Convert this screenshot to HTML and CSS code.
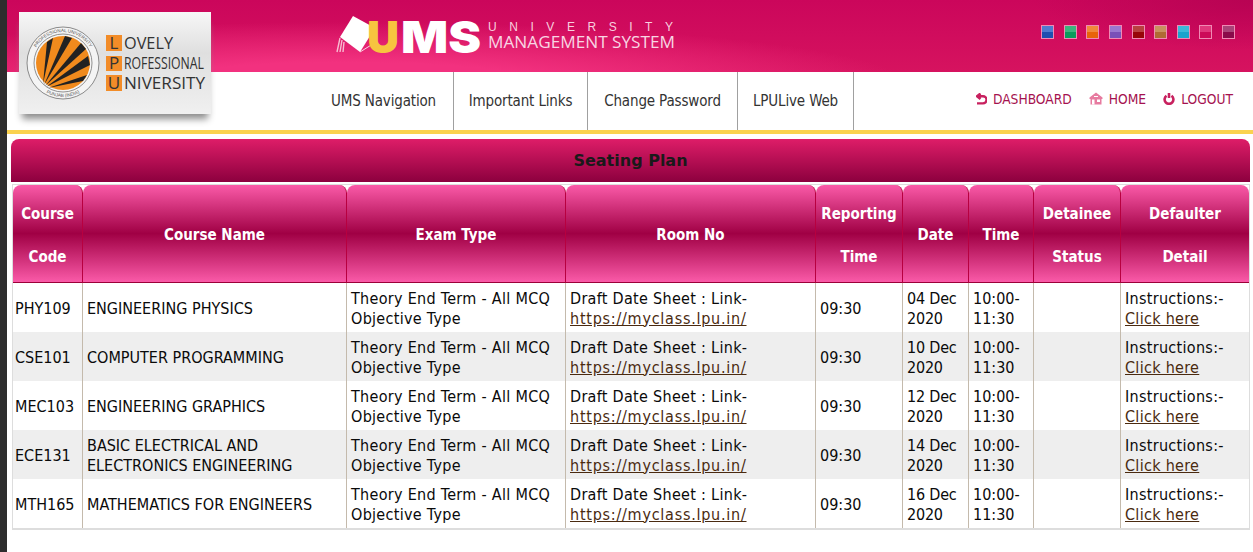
FILE: index.html
```html
<!DOCTYPE html>
<html>

<head>
    <meta content="text/html; charset=utf-8" http-equiv="Content-Type">
    <title>Seating Plan</title>
    <link rel="stylesheet" href="styles.css">
</head>

<body>
    <div class="pageWrap">
        <div class="sideStrip"></div>
        <div class="mainContainer">
            <div class="logoBox">
                <svg class="logoSeal" width="76" height="76" viewBox="0 0 76 76">
                    <defs>
                        <path id="sealTop" d="M7 38 A31 31 0 0 1 69 38"></path>
                        <path id="sealBottom" d="M4 38 A34 34 0 0 0 72 38"></path>
                    </defs>
                    <circle cx="38" cy="38" r="36" fill="#f4f4f4" stroke="#8a8a8a" stroke-width="1"></circle>
                    <circle cx="38" cy="38" r="29" fill="#f4f4f4" stroke="#777" stroke-width="0.8"></circle>
                    <circle cx="38" cy="38" r="27" fill="#f08a1d"></circle>
                    <path d="M18 59 L22 17 L28 13 Z" fill="#222"></path>
                    <path d="M19 60 L40 11 L47 13 Z" fill="#222"></path>
                    <path d="M20 61 L56 18 L61 24 Z" fill="#222"></path>
                    <path d="M21 62 L63 31 L65 40 Z" fill="#222"></path>
                    <path d="M23 63 L62 50 L58 56 Z" fill="#222"></path>
                    <text class="sealText"><textPath href="#sealTop" startOffset="50%" text-anchor="middle">PROFESSIONAL UNIVERSITY</textPath></text>
                    <text class="sealText"><textPath href="#sealBottom" startOffset="50%" text-anchor="middle">PUNJAB (INDIA)</textPath></text>
                </svg>
                <svg class="logoWords" width="104" height="72" viewBox="0 0 104 72">
                    <rect x="0" y="8" width="16" height="16" fill="#f28c28"></rect>
                    <rect x="0" y="29" width="16" height="15" fill="#f28c28"></rect>
                    <rect x="0" y="48" width="16" height="16" fill="#f28c28"></rect>
                    <text class="logoLetter" x="8" y="22" text-anchor="middle">L</text>
                    <text class="logoLetter" x="8" y="42" text-anchor="middle">P</text>
                    <text class="logoLetter" x="8" y="62" text-anchor="middle">U</text>
                    <text class="logoLetter" x="18" y="22" textLength="49" lengthAdjust="spacingAndGlyphs">OVELY</text>
                    <text class="logoLetter" x="18" y="42" textLength="80" lengthAdjust="spacingAndGlyphs">ROFESSIONAL</text>
                    <text class="logoLetter" x="18" y="62" textLength="81" lengthAdjust="spacingAndGlyphs">NIVERSITY</text>
                </svg>
            </div>

            <div class="topBar">
                <div class="umsBrand">
                    <svg class="umsMark" width="345" height="57" viewBox="0 0 345 57">
                        <path d="M6 22 L19 1 L41 13 L26 37 Z" fill="#fff"></path>
                        <path d="M41 13 L42 27 L26 37" fill="none" stroke="#f9d7e3" stroke-width="1"></path>
                        <path d="M6 23 L3 37 M8 25 L6 37 M10 27 L9 37" stroke="#f7bdd2" stroke-width="1.4"></path>
                        <text class="umsU" x="33" y="38" textLength="32" lengthAdjust="spacingAndGlyphs">U</text>
                        <text class="umsRest" x="67" y="38" textLength="80" lengthAdjust="spacingAndGlyphs">MS</text>
                        <text class="umsTop" x="154" y="16" textLength="185" lengthAdjust="spacing">UNIVERSITY</text>
                        <text class="umsBottom" x="154" y="33" textLength="187" lengthAdjust="spacingAndGlyphs">MANAGEMENT SYSTEM</text>
                    </svg>
                </div>
                <div class="themeSwatches">
                    <span class="swatch swBlue"></span>
                    <span class="swatch swGreen"></span>
                    <span class="swatch swOrange"></span>
                    <span class="swatch swPurple"></span>
                    <span class="swatch swRed"></span>
                    <span class="swatch swTan"></span>
                    <span class="swatch swCyan"></span>
                    <span class="swatch swPink"></span>
                    <span class="swatch swMaroon"></span>
                </div>
            </div>

            <div class="navBar">
                <div class="navItems">
                    <a class="navItem">UMS Navigation</a>
                    <a class="navItem">Important Links</a>
                    <a class="navItem">Change Password</a>
                    <a class="navItem">LPULive Web</a>
                </div>
                <div class="quickLinks">
                    <a class="quickLink">
                        <svg width="11" height="12" viewBox="0 0 11 12"><path d="M4.5 0.5 L1 3.2 L4.5 6 M1.5 3.2 H7 A3.6 3.6 0 0 1 7 10.4 H1" fill="none" stroke="#c8215f" stroke-width="2.4"></path></svg>
                        DASHBOARD
                    </a>
                    <a class="quickLink">
                        <svg width="14" height="13" viewBox="0 0 14 13"><path d="M7 0.5 L13.5 5.5 V7 H12.5 V12.5 H1.5 V7 H0.5 V5.5 Z" fill="#e77ba0"></path><path d="M3 7.5 H5.5 V12.5 H3 Z M8 7.5 H11 V10 H8 Z" fill="#fff"></path><path d="M5 4.5 H9" stroke="#fff"></path></svg>
                        HOME
                    </a>
                    <a class="quickLink">
                        <svg width="12" height="13" viewBox="0 0 12 13"><path d="M3.5 3.8 A4.4 4.4 0 1 0 8.5 3.8" fill="none" stroke="#c8215f" stroke-width="2.6"></path><path d="M6 1 V6" stroke="#c8215f" stroke-width="2.6"></path></svg>
                        LOGOUT
                    </a>
                </div>
            </div>
            <div class="yellowRule"></div>

            <div class="titleBar">Seating Plan</div>

            <table class="planTable">
                <colgroup>
                    <col class="colCode">
                    <col class="colName">
                    <col class="colExam">
                    <col class="colRoom">
                    <col class="colReport">
                    <col class="colDate">
                    <col class="colTime">
                    <col class="colStatus">
                    <col class="colDetail">
                </colgroup>
                <thead>
                    <tr>
                        <th>Course<br>Code</th>
                        <th>Course Name</th>
                        <th>Exam Type</th>
                        <th>Room No</th>
                        <th>Reporting<br>Time</th>
                        <th>Date</th>
                        <th>Time</th>
                        <th>Detainee<br>Status</th>
                        <th>Defaulter<br>Detail</th>
                    </tr>
                </thead>
                <tbody>
                    <tr>
                        <td>PHY109</td>
                        <td>ENGINEERING PHYSICS</td>
                        <td>Theory End Term - All MCQ Objective Type</td>
                        <td>Draft Date Sheet : Link-<br><a>https://myclass.lpu.in/</a></td>
                        <td>09:30</td>
                        <td>04 Dec 2020</td>
                        <td>10:00-<br>11:30</td>
                        <td></td>
                        <td>Instructions:-<br><a>Click here</a></td>
                    </tr>
                    <tr>
                        <td>CSE101</td>
                        <td>COMPUTER PROGRAMMING</td>
                        <td>Theory End Term - All MCQ Objective Type</td>
                        <td>Draft Date Sheet : Link-<br><a>https://myclass.lpu.in/</a></td>
                        <td>09:30</td>
                        <td>10 Dec 2020</td>
                        <td>10:00-<br>11:30</td>
                        <td></td>
                        <td>Instructions:-<br><a>Click here</a></td>
                    </tr>
                    <tr>
                        <td>MEC103</td>
                        <td>ENGINEERING GRAPHICS</td>
                        <td>Theory End Term - All MCQ Objective Type</td>
                        <td>Draft Date Sheet : Link-<br><a>https://myclass.lpu.in/</a></td>
                        <td>09:30</td>
                        <td>12 Dec 2020</td>
                        <td>10:00-<br>11:30</td>
                        <td></td>
                        <td>Instructions:-<br><a>Click here</a></td>
                    </tr>
                    <tr>
                        <td>ECE131</td>
                        <td>BASIC ELECTRICAL AND ELECTRONICS ENGINEERING</td>
                        <td>Theory End Term - All MCQ Objective Type</td>
                        <td>Draft Date Sheet : Link-<br><a>https://myclass.lpu.in/</a></td>
                        <td>09:30</td>
                        <td>14 Dec 2020</td>
                        <td>10:00-<br>11:30</td>
                        <td></td>
                        <td>Instructions:-<br><a>Click here</a></td>
                    </tr>
                    <tr>
                        <td>MTH165</td>
                        <td>MATHEMATICS FOR ENGINEERS</td>
                        <td>Theory End Term - All MCQ Objective Type</td>
                        <td>Draft Date Sheet : Link-<br><a>https://myclass.lpu.in/</a></td>
                        <td>09:30</td>
                        <td>16 Dec 2020</td>
                        <td>10:00-<br>11:30</td>
                        <td></td>
                        <td>Instructions:-<br><a>Click here</a></td>
                    </tr>
                </tbody>
            </table>
        </div>
    </div>
</body>

</html>
```

FILE: styles.css
```css
html, body {
    margin: 0;
    padding: 0;
    height: 552px;
    overflow: hidden;
    background: #fff;
    font-family: "DejaVu Sans Condensed", "DejaVu Sans", sans-serif;
}

.pageWrap {
    display: flex;
    height: 552px;
}

.sideStrip {
    flex: 0 0 7px;
    background: #2d2d2d;
}

.mainContainer {
    position: relative;
    flex: 1;
    min-width: 0;
}

/* logo card sits over both the pink bar and the nav */
.logoBox {
    position: absolute;
    left: 12px;
    top: 12px;
    width: 192px;
    height: 102px;
    display: flex;
    align-items: center;
    gap: 5px;
    padding-left: 6px;
    box-sizing: border-box;
    background: linear-gradient(#f7f7f7, #dfdfdf 40%, #f0f0f0);
    box-shadow: 0 8px 7px -3px #8d8d8d;
}

.logoSeal {
    flex: none;
}

.sealText {
    font-family: "Liberation Sans", sans-serif;
    font-size: 4.6px;
    fill: #555;
}

.logoWords {
    flex: none;
}

.logoLetter {
    font-family: "Open Sans", sans-serif;
    font-size: 17px;
    fill: #333;
}

.topBar {
    display: flex;
    justify-content: space-between;
    height: 72px;
    background:
        radial-gradient(ellipse 560px 62px at 340px 84px, #f2317f 35%, rgba(242, 49, 127, 0)),
        radial-gradient(ellipse 220px 50px at 1246px 0, #b80353, rgba(184, 3, 83, 0)),
        linear-gradient(#cb065b, #d6135f);
}

.umsBrand {
    padding: 15px 0 0 327px;
}

.umsMark {
    display: block;
}

.umsU {
    font-family: Inter, sans-serif;
    font-size: 44px;
    font-weight: 900;
    fill: #f7c53f;
}

.umsRest {
    font-family: Inter, sans-serif;
    font-size: 44px;
    font-weight: 900;
    fill: #fff;
}

.umsTop {
    font-family: "Liberation Sans", sans-serif;
    font-size: 12px;
    fill: #f8cfdf;
}

.umsBottom {
    font-family: "Open Sans", sans-serif;
    font-size: 16px;
    fill: #f8d5e3;
}

.themeSwatches {
    display: flex;
    gap: 9.6px;
    padding: 25px 18px 0 0;
}

.swatch {
    width: 13px;
    height: 14px;
    box-sizing: border-box;
    border: 1px solid #f08ab4;
}

.swBlue {
    background: linear-gradient(#4f7bd0 50%, #1f4fb0 50%);
}

.swGreen {
    background: linear-gradient(#3cb57d 50%, #0a9c5c 50%);
}

.swOrange {
    background: linear-gradient(#f0893a 50%, #e8640a 50%);
}

.swPurple {
    background: linear-gradient(#9a78d0 50%, #7a50b8 50%);
}

.swRed {
    background: linear-gradient(#b8403f 50%, #98050a 50%);
}

.swTan {
    background: linear-gradient(#c8925e 50%, #b06a34 50%);
}

.swCyan {
    background: linear-gradient(#3cb8d8 50%, #1aa4cc 50%);
}

.swPink {
    background: linear-gradient(#e0387c 50%, #cc0a58 50%);
}

.swMaroon {
    background: linear-gradient(#a84478 50%, #8a0a4a 50%);
}

.navBar {
    display: flex;
    height: 58px;
    padding-left: 307px;
    box-sizing: border-box;
}

.navItems {
    display: grid;
    grid-template-columns: 140px 134px 150px 116px;
}

.navItem {
    display: flex;
    align-items: center;
    justify-content: center;
    border-right: 1px solid #a0a0a0;
    color: #333;
    font-size: 15px;
    letter-spacing: -0.15px;
    white-space: nowrap;
}

.quickLinks {
    display: flex;
    align-items: center;
    gap: 17px;
    margin-left: auto;
    padding: 0 20px 5px 0;
}

.quickLink {
    display: flex;
    align-items: center;
    gap: 6px;
    color: #a5124f;
    font-size: 13.7px;
}

.yellowRule {
    height: 4px;
    background: #fad24f;
}

.titleBar {
    height: 43px;
    margin: 5px 3px 2px 4px;
    line-height: 44px;
    text-align: center;
    border-radius: 8px 8px 0 0;
    background: linear-gradient(#de1d68, #8c003e);
    color: #1a1a1a;
    font-family: "DejaVu Sans", sans-serif;
    font-size: 16px;
    font-weight: bold;
}

.planTable {
    width: 1238px;
    margin-left: 5px;
    table-layout: fixed;
    border-collapse: separate;
    border-spacing: 0;
    border: 1px solid #ddd;
    border-bottom-width: 2px;
    font-size: 16px;
    color: #0a0a0a;
}

.colCode {
    width: 70px;
}

.colName {
    width: 264px;
}

.colExam {
    width: 219px;
}

.colRoom {
    width: 250px;
}

.colReport {
    width: 87px;
}

.colDate {
    width: 66px;
}

.colTime {
    width: 65px;
}

.colStatus {
    width: 87px;
}

.colDetail {
    width: 128px;
}

.planTable th {
    height: 98px;
    padding: 4px 0 0;
    border-right: 1px solid #b8003f;
    border-bottom: 1px solid #9c0038;
    border-radius: 8px 8px 0 0;
    background: linear-gradient(#fa5aa8, #a00044 50%, #fa5aa8);
    color: #fff;
    font-size: 15px;
    font-weight: bold;
    line-height: 43px;
    text-align: center;
    box-sizing: border-box;
}

.planTable td {
    height: 49px;
    padding: 2px 3px 0 4px;
    border-right: 1px solid #c4baac;
    line-height: 20px;
    vertical-align: middle;
    box-sizing: border-box;
}

.planTable td:first-child {
    padding-left: 2px;
}

.planTable td:nth-child(3),
.planTable td:nth-child(4),
.planTable td:nth-child(9) {
    letter-spacing: 0.3px;
}

.planTable td:nth-child(6) {
    letter-spacing: -0.2px;
}

.planTable td:nth-child(4) a {
    letter-spacing: 0.75px;
}

.planTable td:last-child,
.planTable th:last-child {
    border-right: 0;
}

.planTable tbody tr:nth-child(even) td {
    background: #eee;
}

.planTable a {
    color: #4a2a10;
    text-decoration: underline;
}
```
